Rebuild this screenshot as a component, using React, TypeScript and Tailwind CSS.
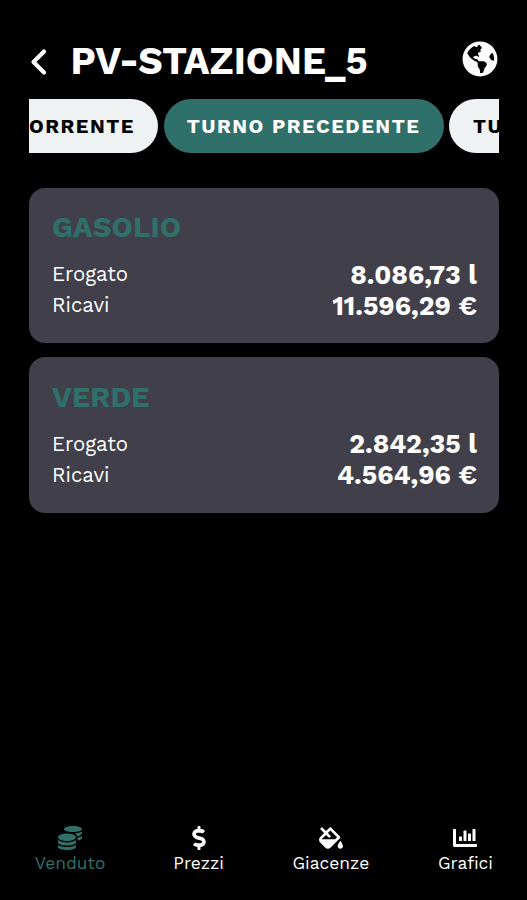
import React, { useState } from "react";
import { FaChartBar, FaCoins, FaDollarSign, FaFillDrip, FaGlobeAmericas } from "react-icons/fa";

const shifts = [
  { id: "corrente", name: "TURNO CORRENTE", box: "w-[240px] justify-end pr-[23px]" },
  { id: "precedente", name: "TURNO PRECEDENTE", box: "w-[280px] justify-center" },
  { id: "turni", name: "TURNI PRECEDENTI", box: "w-[280px] justify-start pl-6" },
];

const products = [
  { name: "GASOLIO", erogato: "8.086,73 l", ricavi: "11.596,29 €" },
  { name: "VERDE", erogato: "2.842,35 l", ricavi: "4.564,96 €" },
];

const navItems = [
  { id: "venduto", name: "Venduto", icon: FaCoins, box: "w-[70px]" },
  { id: "prezzi", name: "Prezzi", icon: FaDollarSign, box: "w-[50px]" },
  { id: "giacenze", name: "Giacenze", icon: FaFillDrip, box: "w-[77px]" },
  { id: "grafici", name: "Grafici", icon: FaChartBar, box: "w-[55px]" },
];

function ProductCard({ name, erogato, ricavi }: { name: string; erogato: string; ricavi: string }) {
  const rows = [
    { label: "Erogato", value: erogato },
    { label: "Ricavi", value: ricavi },
  ];

  return (
    <div className="h-[155.5px] rounded-2xl bg-[#41404a] pt-[22.5px] pr-[22px] pl-[23px]">
      <h2 className="mb-[14.5px] text-[29px] leading-[34px] font-bold tracking-[0.1px] text-[#30706a]">{name}</h2>
      {rows.map((row) => (
        <div key={row.label} className="flex h-[31px] items-center justify-between">
          <span className="pt-px text-[20.4px]">{row.label}</span>
          <span className="pt-px text-[26.5px] font-bold">{row.value}</span>
        </div>
      ))}
    </div>
  );
}

export default function App() {
  const [shift, setShift] = useState("precedente");
  const [page, setPage] = useState("venduto");

  return (
    <div className="flex h-[900px] w-full flex-col overflow-hidden bg-black pr-[28px] pl-[29px] font-['Work_Sans','Inter',sans-serif] text-white">
      {/* Header */}
      <header className="flex h-[99.4px] shrink-0 items-center pt-[24px]">
        <button className="ml-[1px] shrink-0" aria-label="Indietro">
          <svg width="18" height="28" viewBox="0 0 18 28" fill="none" stroke="currentColor" strokeWidth="4.2" strokeLinecap="round" strokeLinejoin="round">
            <path d="M14 3.5 3.5 14 14 24.5" />
          </svg>
        </button>
        <h1 className="mb-px ml-[22.5px] text-[38px] leading-none font-bold whitespace-nowrap">PV-STAZIONE_5</h1>
        <button className="mr-px mb-[6px] ml-auto" aria-label="Lingua">
          <FaGlobeAmericas size={36} />
        </button>
      </header>

      {/* Shift selector */}
      <div className="flex shrink-0 gap-[5.5px] overflow-hidden">
        {shifts.map((s, i) => (
          <button
            key={s.id}
            onClick={() => setShift(s.id)}
            className={`flex h-[54px] shrink-0 items-center rounded-full text-[20px] font-bold tracking-[1.5px] whitespace-nowrap ${s.box} ${i === 0 ? "-ml-[111px]" : ""} ${
              shift === s.id ? "bg-[#30706a] text-white" : "bg-[#eef2f2] text-black"
            }`}
          >
            {s.name}
          </button>
        ))}
      </div>

      {/* Products */}
      <main className="mt-[34.2px] flex flex-1 flex-col gap-[14px]">
        {products.map((p) => (
          <ProductCard key={p.name} {...p} />
        ))}
      </main>

      {/* Bottom navigation */}
      <nav className="flex h-[75px] shrink-0 justify-between pr-[6px] pl-[6px]">
        {navItems.map((item) => (
          <button
            key={item.id}
            onClick={() => setPage(item.id)}
            className={`flex flex-col items-center ${item.box} ${page === item.id ? "text-[#30706a]" : "text-white"}`}
          >
            <item.icon className="mt-[1px] h-6 w-auto" />
            <span className="mt-[2px] text-[17.4px] leading-[22px]">{item.name}</span>
          </button>
        ))}
      </nav>
    </div>
  );
}
